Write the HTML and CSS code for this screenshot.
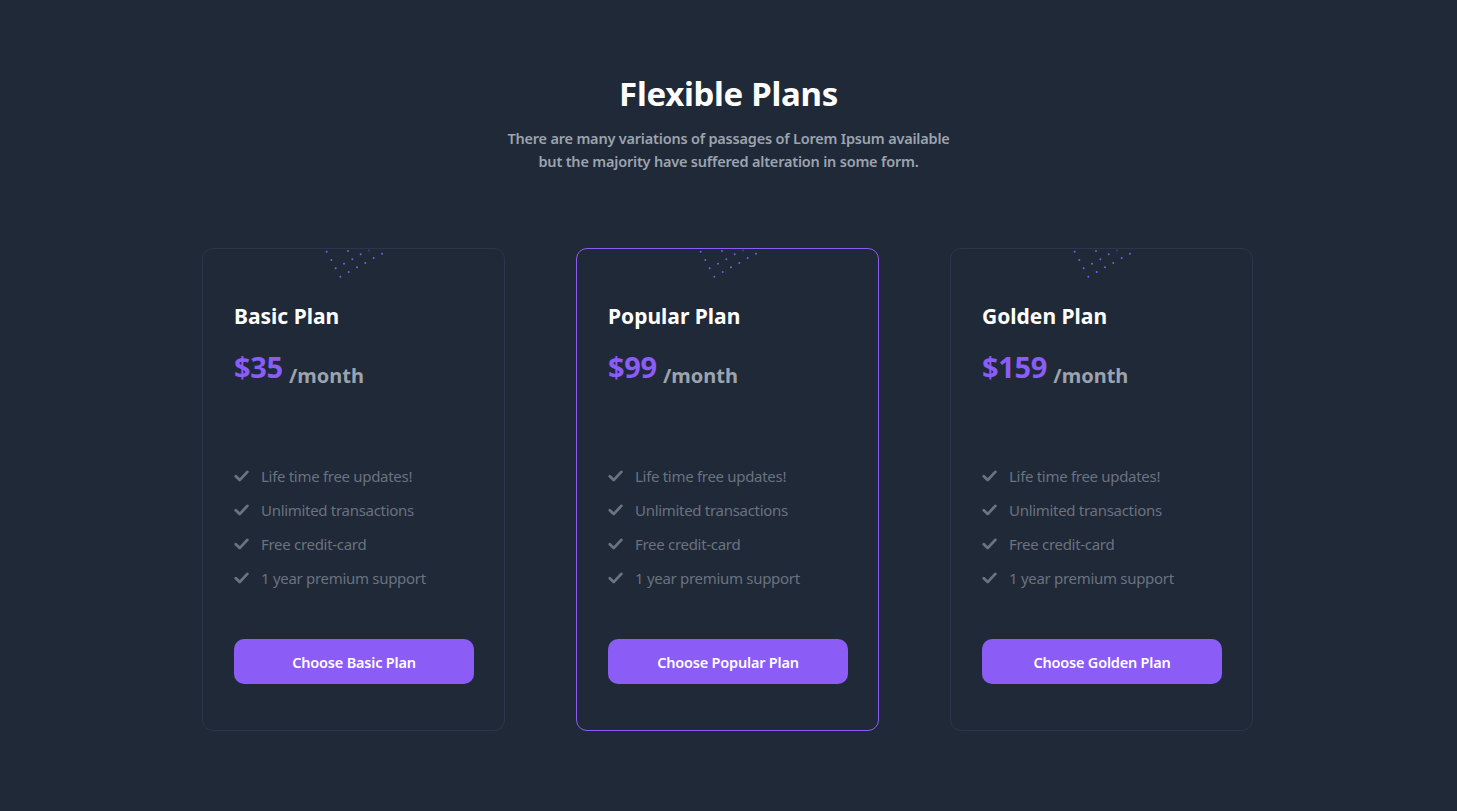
FILE: index.html
```html
<!DOCTYPE html>
<html lang="en">
<head>
<meta charset="utf-8">
<title>Flexible Plans</title>
<link rel="stylesheet" href="styles.css">
</head>
<body>
<section class="pricing">
  <header class="intro">
    <h1 class="intro-title">Flexible Plans</h1>
    <p class="intro-text">There are many variations of passages of Lorem Ipsum available<br>but the majority have suffered alteration in some form.</p>
  </header>
  <div class="plans">
    <article class="plan">
      <svg class="dots" width="70" height="32" viewBox="0 0 70 32"><g fill="#7c5ce6"><circle cx="1.7" cy="2.7" r="1"/><circle cx="23" cy="2" r="1"/><circle cx="44" cy="1.5" r="1" opacity=".45"/><circle cx="6.3" cy="11" r="1"/><circle cx="35.7" cy="5.3" r="1"/><circle cx="57" cy="4.7" r="1"/><circle cx="27.3" cy="10.3" r="1"/><circle cx="48.7" cy="9" r="1"/><circle cx="19" cy="14.7" r="1"/><circle cx="10.7" cy="19.3" r="1"/><circle cx="40.3" cy="14" r="1"/><circle cx="32" cy="18.3" r="1"/><circle cx="23.7" cy="23" r="1"/><circle cx="15.3" cy="27.7" r="1"/></g></svg>
      <h2 class="plan-name">Basic Plan</h2>
      <p class="plan-price"><span class="amount">$35</span> <span class="period">/month</span></p>
      <ul class="features">
        <li><svg class="check" width="15" height="12" viewBox="0 0 15 12"><path d="M1.8 6.2l3.9 3.9 7.6-8.2" fill="none" stroke="currentColor" stroke-width="2.8" stroke-linecap="round" stroke-linejoin="round"/></svg>Life time free updates!</li>
        <li><svg class="check" width="15" height="12" viewBox="0 0 15 12"><path d="M1.8 6.2l3.9 3.9 7.6-8.2" fill="none" stroke="currentColor" stroke-width="2.8" stroke-linecap="round" stroke-linejoin="round"/></svg>Unlimited transactions</li>
        <li><svg class="check" width="15" height="12" viewBox="0 0 15 12"><path d="M1.8 6.2l3.9 3.9 7.6-8.2" fill="none" stroke="currentColor" stroke-width="2.8" stroke-linecap="round" stroke-linejoin="round"/></svg>Free credit-card</li>
        <li><svg class="check" width="15" height="12" viewBox="0 0 15 12"><path d="M1.8 6.2l3.9 3.9 7.6-8.2" fill="none" stroke="currentColor" stroke-width="2.8" stroke-linecap="round" stroke-linejoin="round"/></svg>1 year premium support</li>
      </ul>
      <button class="plan-btn">Choose Basic Plan</button>
    </article>
    <article class="plan plan-featured">
      <svg class="dots" width="70" height="32" viewBox="0 0 70 32"><g fill="#7c5ce6"><circle cx="1.7" cy="2.7" r="1"/><circle cx="23" cy="2" r="1"/><circle cx="44" cy="1.5" r="1" opacity=".45"/><circle cx="6.3" cy="11" r="1"/><circle cx="35.7" cy="5.3" r="1"/><circle cx="57" cy="4.7" r="1"/><circle cx="27.3" cy="10.3" r="1"/><circle cx="48.7" cy="9" r="1"/><circle cx="19" cy="14.7" r="1"/><circle cx="10.7" cy="19.3" r="1"/><circle cx="40.3" cy="14" r="1"/><circle cx="32" cy="18.3" r="1"/><circle cx="23.7" cy="23" r="1"/><circle cx="15.3" cy="27.7" r="1"/></g></svg>
      <h2 class="plan-name">Popular Plan</h2>
      <p class="plan-price"><span class="amount">$99</span> <span class="period">/month</span></p>
      <ul class="features">
        <li><svg class="check" width="15" height="12" viewBox="0 0 15 12"><path d="M1.8 6.2l3.9 3.9 7.6-8.2" fill="none" stroke="currentColor" stroke-width="2.8" stroke-linecap="round" stroke-linejoin="round"/></svg>Life time free updates!</li>
        <li><svg class="check" width="15" height="12" viewBox="0 0 15 12"><path d="M1.8 6.2l3.9 3.9 7.6-8.2" fill="none" stroke="currentColor" stroke-width="2.8" stroke-linecap="round" stroke-linejoin="round"/></svg>Unlimited transactions</li>
        <li><svg class="check" width="15" height="12" viewBox="0 0 15 12"><path d="M1.8 6.2l3.9 3.9 7.6-8.2" fill="none" stroke="currentColor" stroke-width="2.8" stroke-linecap="round" stroke-linejoin="round"/></svg>Free credit-card</li>
        <li><svg class="check" width="15" height="12" viewBox="0 0 15 12"><path d="M1.8 6.2l3.9 3.9 7.6-8.2" fill="none" stroke="currentColor" stroke-width="2.8" stroke-linecap="round" stroke-linejoin="round"/></svg>1 year premium support</li>
      </ul>
      <button class="plan-btn">Choose Popular Plan</button>
    </article>
    <article class="plan">
      <svg class="dots" width="70" height="32" viewBox="0 0 70 32"><g fill="#7c5ce6"><circle cx="1.7" cy="2.7" r="1"/><circle cx="23" cy="2" r="1"/><circle cx="44" cy="1.5" r="1" opacity=".45"/><circle cx="6.3" cy="11" r="1"/><circle cx="35.7" cy="5.3" r="1"/><circle cx="57" cy="4.7" r="1"/><circle cx="27.3" cy="10.3" r="1"/><circle cx="48.7" cy="9" r="1"/><circle cx="19" cy="14.7" r="1"/><circle cx="10.7" cy="19.3" r="1"/><circle cx="40.3" cy="14" r="1"/><circle cx="32" cy="18.3" r="1"/><circle cx="23.7" cy="23" r="1"/><circle cx="15.3" cy="27.7" r="1"/></g></svg>
      <h2 class="plan-name">Golden Plan</h2>
      <p class="plan-price"><span class="amount">$159</span> <span class="period">/month</span></p>
      <ul class="features">
        <li><svg class="check" width="15" height="12" viewBox="0 0 15 12"><path d="M1.8 6.2l3.9 3.9 7.6-8.2" fill="none" stroke="currentColor" stroke-width="2.8" stroke-linecap="round" stroke-linejoin="round"/></svg>Life time free updates!</li>
        <li><svg class="check" width="15" height="12" viewBox="0 0 15 12"><path d="M1.8 6.2l3.9 3.9 7.6-8.2" fill="none" stroke="currentColor" stroke-width="2.8" stroke-linecap="round" stroke-linejoin="round"/></svg>Unlimited transactions</li>
        <li><svg class="check" width="15" height="12" viewBox="0 0 15 12"><path d="M1.8 6.2l3.9 3.9 7.6-8.2" fill="none" stroke="currentColor" stroke-width="2.8" stroke-linecap="round" stroke-linejoin="round"/></svg>Free credit-card</li>
        <li><svg class="check" width="15" height="12" viewBox="0 0 15 12"><path d="M1.8 6.2l3.9 3.9 7.6-8.2" fill="none" stroke="currentColor" stroke-width="2.8" stroke-linecap="round" stroke-linejoin="round"/></svg>1 year premium support</li>
      </ul>
      <button class="plan-btn">Choose Golden Plan</button>
    </article>
  </div>
</section>
</body>
</html>
```

FILE: styles.css
```css
* { box-sizing: border-box; }
html, body { margin: 0; padding: 0; }
body {
  background: #1f2937;
  font-family: "Noto Sans", "Open Sans", sans-serif;
  min-height: 811px;
}
.pricing {
  padding-top: 71px;
  display: flex;
  flex-direction: column;
  align-items: center;
}
.intro { text-align: center; }
.intro-title {
  margin: 0;
  font-size: 33px;
  line-height: 46px;
  font-weight: 700;
  color: #ffffff;
  letter-spacing: -0.3px;
}
.intro-text {
  margin: 10px 0 0;
  font-size: 14.5px;
  line-height: 23px;
  font-weight: 600;
  color: #9ca3af;
  letter-spacing: -0.2px;
}
.plans {
  margin-top: 75px;
  display: flex;
  gap: 71px;
  padding-right: 2px;
}
.plan {
  position: relative;
  width: 303px;
  height: 483px;
  border: 1px solid #2c354b;
  border-radius: 11px;
  padding: 50px 31px 0;
  display: flex;
  flex-direction: column;
}
.plan-featured { border-color: #8b5cf6; }
.dots {
  position: absolute;
  top: 0;
  left: 122px;
}
.plan-name {
  margin: 0;
  font-size: 21px;
  line-height: 34px;
  font-weight: 700;
  color: #ffffff;
}
.plan-price {
  margin: 14px 0 0;
  line-height: 40px;
}
.amount {
  font-size: 29px;
  font-weight: 700;
  color: #8b5cf6;
  letter-spacing: -0.3px;
}
.period {
  position: relative;
  top: 5px;
  font-size: 20px;
  font-weight: 700;
  color: #9ca3af;
  margin-left: 2px;
}
.features {
  list-style: none;
  margin: 72px 0 0;
  padding: 0;
  display: flex;
  flex-direction: column;
  gap: 10px;
}
.features li {
  display: flex;
  align-items: center;
  gap: 12px;
  font-size: 15px;
  line-height: 24px;
  color: #6b7280;
  letter-spacing: -0.3px;
}
.check { color: #6b7280; flex: none; }
.plan-btn {
  margin-top: 49px;
  width: 240px;
  height: 45px;
  border: 0;
  border-radius: 10px;
  background: #8b5cf6;
  color: #ffffff;
  font-family: inherit;
  font-size: 14.5px;
  font-weight: 600;
  letter-spacing: -0.2px;
}
```
